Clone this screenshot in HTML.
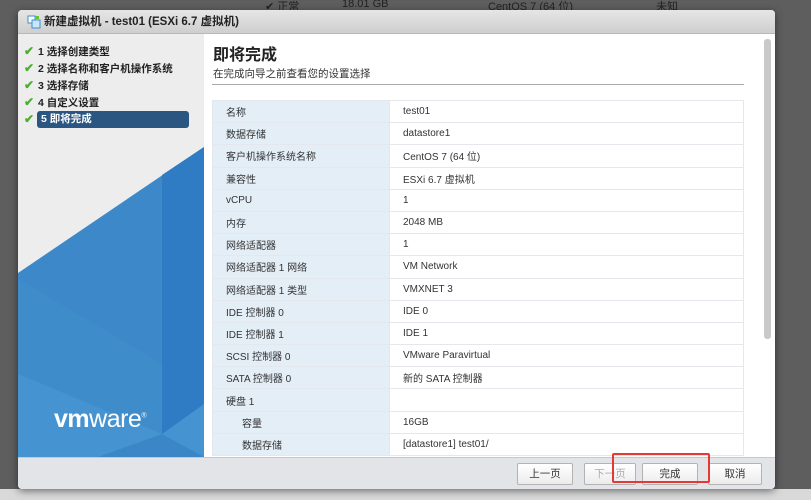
<!DOCTYPE html>
<html><head><meta charset="utf-8"><style>
*{margin:0;padding:0;box-sizing:border-box}
body{width:811px;height:500px;overflow:hidden;background:#5e5e5e;font-family:"Liberation Sans","Noto Sans CJK SC",sans-serif;position:relative}
.t{position:absolute;font-size:11px;color:#333}
#dlg{position:absolute;left:18px;top:10px;width:757px;height:479px;background:#fff;border-radius:4px;box-shadow:0 2px 8px rgba(0,0,0,.5);overflow:hidden}
#title{height:24px;background:linear-gradient(#e6e6e6,#cfcfcf);border-bottom:1px solid #b8b8b8;font-size:11.5px;color:#222;line-height:24px;padding-left:26px;font-weight:bold}
#left{position:absolute;left:0;top:24px;width:186px;height:423px;background:#eeeded;overflow:hidden}
.st{position:absolute;left:6px;font-size:10.5px;color:#222;font-weight:bold;height:16px;line-height:16px}
.st i{color:#4caf32;font-style:normal;display:inline-block;width:14px;font-size:12px}
#foot{position:absolute;left:0;top:447px;width:757px;height:32px;background:#e2e4e7;border-top:1px solid #c8c8c8}
.btn{position:absolute;top:5px;height:22px;border:1px solid #b3b3b3;border-radius:2px;background:linear-gradient(#fff,#ececec);font-size:10.5px;text-align:center;line-height:20px;color:#333}
table{position:absolute;left:194px;top:90px;width:532px;border-collapse:collapse;font-size:10px;color:#333}
td{height:22.2px;border:1px solid #e4e8ec;padding-left:13px;vertical-align:middle}
td.l{width:177px;background:#e4eef7}
td.ind{padding-left:29px}
</style></head><body>
<div class="t" style="left:265px;top:-2px;color:#222">✔ 正常</div>
<div class="t" style="left:342px;top:-2px;color:#222">18.01 GB</div>
<div class="t" style="left:488px;top:-2px;color:#222">CentOS 7 (64 位)</div>
<div class="t" style="left:656px;top:-2px;color:#222">未知</div>
<div style="position:absolute;left:0;top:489px;width:811px;height:11px;background:#d9d9d9"></div>
<div id="dlg">
<div id="title"><svg style="position:absolute;left:9px;top:5px" width="14" height="14"><rect x="1" y="1" width="7" height="7" fill="#fff" stroke="#3a8fd0"/><rect x="5" y="5" width="8" height="8" fill="#cde6f7" stroke="#3a8fd0"/><rect x="8" y="1" width="4" height="3" fill="#6cbf3c"/></svg>新建虚拟机 - test01 (ESXi 6.7 虚拟机)</div>
<div id="left">
<svg style="position:absolute;left:0;top:0" width="186" height="423"><polygon points="0,239 186,113 186,423 0,423" fill="#3d88c9"/><polygon points="144,141 186,113 186,380 144,400" fill="#2f7cc4"/><polygon points="0,245 144,330 144,423 0,423" fill="#3f8ccb"/><polygon points="0,340 144,400 186,370 186,423 0,423" fill="#4593d0"/><polygon points="80,423 144,400 186,423" fill="#3a86c6"/></svg>
<div class="st" style="top:9px"><i>✔</i>1 选择创建类型</div>
<div class="st" style="top:26px"><i>✔</i>2 选择名称和客户机操作系统</div>
<div class="st" style="top:43px"><i>✔</i>3 选择存储</div>
<div class="st" style="top:60px"><i>✔</i>4 自定义设置</div>
<div class="st" style="top:77px"><i>✔</i></div>
<div style="position:absolute;left:19px;top:77px;width:152px;height:17px;background:#2b5681;border-radius:3px;color:#fff;font-size:10.5px;font-weight:bold;line-height:17px;padding-left:4px">5 即将完成</div>
<div style="position:absolute;left:36px;top:371px;color:#fff;font-size:25px;letter-spacing:-0.5px"><b style="font-weight:900">vm</b>ware<sup style="font-size:7px">®</sup></div>
</div>
<div style="position:absolute;left:195px;top:31px;font-size:16px;font-weight:bold;color:#222">即将完成</div>
<div style="position:absolute;left:195px;top:56px;font-size:10.5px;color:#333">在完成向导之前查看您的设置选择</div>
<div style="position:absolute;left:194px;top:74px;width:532px;border-top:1px solid #aaa"></div>
<div style="position:absolute;left:746px;top:29px;width:7px;height:300px;background:#c9c9c9;border-radius:3px"></div>
<table>
<tr><td class="l">名称</td><td>test01</td></tr>
<tr><td class="l">数据存储</td><td>datastore1</td></tr>
<tr><td class="l">客户机操作系统名称</td><td>CentOS 7 (64 位)</td></tr>
<tr><td class="l">兼容性</td><td>ESXi 6.7 虚拟机</td></tr>
<tr><td class="l">vCPU</td><td>1</td></tr>
<tr><td class="l">内存</td><td>2048 MB</td></tr>
<tr><td class="l">网络适配器</td><td>1</td></tr>
<tr><td class="l">网络适配器 1 网络</td><td>VM Network</td></tr>
<tr><td class="l">网络适配器 1 类型</td><td>VMXNET 3</td></tr>
<tr><td class="l">IDE 控制器 0</td><td>IDE 0</td></tr>
<tr><td class="l">IDE 控制器 1</td><td>IDE 1</td></tr>
<tr><td class="l">SCSI 控制器 0</td><td>VMware Paravirtual</td></tr>
<tr><td class="l">SATA 控制器 0</td><td>新的 SATA 控制器</td></tr>
<tr><td class="l">硬盘 1</td><td></td></tr>
<tr><td class="l ind">容量</td><td>16GB</td></tr>
<tr><td class="l ind">数据存储</td><td>[datastore1] test01/</td></tr>
</table>
<div id="foot">
<div class="btn" style="left:499px;width:56px">上一页</div>
<div class="btn" style="left:566px;width:52px;color:#aaa">下一页</div>
<div class="btn" style="left:624px;width:56px">完成</div>
<div class="btn" style="left:690px;width:54px">取消</div>
</div>
</div>
<div style="position:absolute;left:612px;top:453px;width:98px;height:30px;border:2px solid #e53935;border-radius:2px"></div>
</body></html>
